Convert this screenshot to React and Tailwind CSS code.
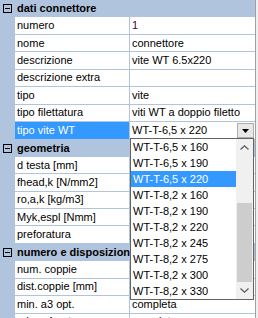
import React from "react";

const LINE = "border-[#b0c4de]";

function Category({ title }) {
  return (
    <div className="flex h-[17.43px] items-center bg-[#b0c4de]">
      <div className="ml-[3px] mr-[5px] flex h-[9px] w-[9px] items-center justify-center border border-black">
        <div className="h-px w-[5px] bg-black" />
      </div>
      <span className="whitespace-nowrap font-bold text-black">{title}</span>
    </div>
  );
}

function Prop({ label, value, selected, valueClass }) {
  return (
    <div className="flex h-[17.43px]">
      <div className="w-[15px] shrink-0 bg-[#b0c4de]" />
      <div
        className={
          "flex w-[115px] shrink-0 items-center overflow-hidden whitespace-nowrap border-b border-r pl-[2px] " +
          LINE +
          (selected ? " bg-[#3399ff] text-white" : " text-black")
        }
      >
        {label}
      </div>
      <div
        className={
          "flex flex-1 items-center overflow-hidden whitespace-nowrap border-b pl-[2px] " +
          LINE +
          " " +
          (valueClass || "text-black")
        }
      >
        {value}
      </div>
    </div>
  );
}

const items = [
  "WT-T-6,5 x 160",
  "WT-T-6,5 x 190",
  "WT-T-6,5 x 220",
  "WT-T-8,2 x 160",
  "WT-T-8,2 x 190",
  "WT-T-8,2 x 220",
  "WT-T-8,2 x 245",
  "WT-T-8,2 x 275",
  "WT-T-8,2 x 300",
  "WT-T-8,2 x 330",
];

export default function App() {
  return (
    <div className="relative h-[318px] w-[258px] overflow-hidden bg-[#f0f0f0] font-['Liberation_Sans',Arial,sans-serif] text-[11px] leading-none">
      <div className="w-[256px] border-r border-[#a0a0a0] bg-white">
        <Category title="dati connettore" />
        <Prop label="numero" value="1" valueClass="text-[#4b0050]" />
        <Prop label="nome" value="connettore" />
        <Prop label="descrizione" value="vite WT 6.5x220" />
        <Prop label="descrizione extra" value="" />
        <Prop label="tipo" value="vite" />
        <Prop label="tipo filettatura" value="viti WT a doppio filetto" />
        <div className="flex h-[17.43px]">
          <div className="w-[15px] shrink-0 bg-[#b0c4de]" />
          <div className="flex w-[115px] shrink-0 items-center whitespace-nowrap border-r border-[#b0c4de] bg-[#3399ff] pl-[2px] text-white">
            tipo vite WT
          </div>
          <div className="flex flex-1 items-center pl-[2px] text-black">
            <span className="flex-1 whitespace-nowrap">WT-T-6,5 x 220</span>
            <div className="mr-[1px] flex h-[15px] w-[17px] items-center justify-center border border-[#adadad] bg-[#e8e8e8]">
              <svg width="7" height="4" viewBox="0 0 7 4">
                <path d="M0 0H7L3.5 4Z" fill="#000" />
              </svg>
            </div>
          </div>
        </div>
        <Category title="geometria" />
        <Prop label="d testa [mm]" value="" />
        <Prop label="fhead,k [N/mm2]" value="" />
        <Prop label="ro,a,k [kg/m3]" value="" />
        <Prop label="Myk,espl [Nmm]" value="" />
        <Prop label="preforatura" value="" />
        <Category title="numero e disposizione" />
        <Prop label="num. coppie" value="" />
        <Prop label="dist.coppie [mm]" value="" />
        <Prop label="min. a3 opt." value="completa" />
        <Prop label="min. a4 opt." value="completa" />
      </div>

      {/* dropdown list */}
      <div className="absolute left-[130px] top-[138px] flex h-[162px] w-[124px] border border-[#646464] bg-white">
        <div className="flex-1">
          {items.map((t, i) => (
            <div
              key={t}
              className={
                "flex h-[16px] items-center whitespace-nowrap pl-[2px] " +
                (i === 2 ? "bg-[#3399ff] text-white" : "text-black")
              }
            >
              {t}
            </div>
          ))}
        </div>
        <div className="flex w-[17px] flex-col bg-[#f0f0f0]">
          <div className="flex h-[17px] items-center justify-center">
            <svg width="9" height="5" viewBox="0 0 9 5">
              <path d="M0.5 4.5L4.5 0.8L8.5 4.5" fill="none" stroke="#606060" strokeWidth="1.3" />
            </svg>
          </div>
          <div className="flex flex-1 flex-col justify-end px-[1px]">
            <div className="h-[79px] bg-[#cdcdcd]" />
          </div>
          <div className="flex h-[17px] items-center justify-center">
            <svg width="9" height="5" viewBox="0 0 9 5">
              <path d="M0.5 0.5L4.5 4.2L8.5 0.5" fill="none" stroke="#606060" strokeWidth="1.3" />
            </svg>
          </div>
        </div>
      </div>
    </div>
  );
}
